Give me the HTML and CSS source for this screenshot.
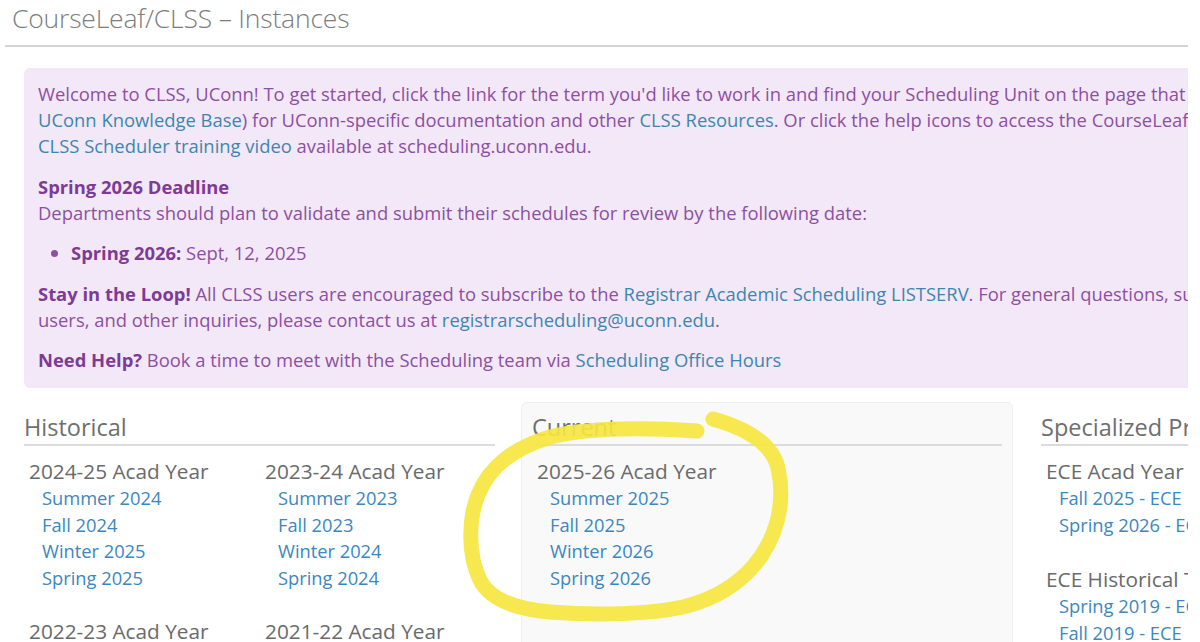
FILE: index.html
```html
<!DOCTYPE html>
<html>
<head>
<meta charset="utf-8">
<link rel="stylesheet" href="styles.css">
</head>
<body>
<div class="page">
  <header class="title-bar">
    <h1 class="title">CourseLeaf/CLSS – Instances</h1>
  </header>
  <section class="notice">
    <p class="para intro">Welcome to CLSS, UConn! To get started, click the link for the term you'd like to work in and find your Scheduling Unit on the page that<br><a class="link">UConn Knowledge Base</a>) for UConn-specific documentation and other <a class="link">CLSS Resources</a>. Or click the help icons to access the CourseLeaf<br><a class="link">CLSS Scheduler training video</a> available at scheduling.uconn.edu.</p>
    <p class="para"><strong>Spring 2026 Deadline</strong><br>Departments should plan to validate and submit their schedules for review by the following date:</p>
    <ul class="deadlines">
      <li><strong>Spring 2026:</strong> Sept, 12, 2025</li>
    </ul>
    <p class="para"><strong>Stay in the Loop!</strong> All CLSS users are encouraged to subscribe to the <a class="link">Registrar Academic Scheduling LISTSERV</a>. For general questions, su<br>users, and other inquiries, please contact us at <a class="link">registrarscheduling@uconn.edu</a>.</p>
    <p class="para"><strong>Need Help?</strong> Book a time to meet with the Scheduling team via <a class="link">Scheduling Office Hours</a></p>
  </section>
  <div class="lower">
    <section class="group historical">
      <h2 class="group-title">Historical</h2>
      <div class="years">
        <div class="year">
          <h3 class="year-title">2024-25 Acad Year</h3>
          <a class="term">Summer 2024</a>
          <a class="term">Fall 2024</a>
          <a class="term">Winter 2025</a>
          <a class="term">Spring 2025</a>
        </div>
        <div class="year">
          <h3 class="year-title">2023-24 Acad Year</h3>
          <a class="term">Summer 2023</a>
          <a class="term">Fall 2023</a>
          <a class="term">Winter 2024</a>
          <a class="term">Spring 2024</a>
        </div>
        <div class="year">
          <h3 class="year-title">2022-23 Acad Year</h3>
          <a class="term">Summer 2022</a>
        </div>
        <div class="year">
          <h3 class="year-title">2021-22 Acad Year</h3>
          <a class="term">Summer 2021</a>
        </div>
      </div>
    </section>
    <section class="group current">
      <h2 class="group-title">Current</h2>
      <div class="year">
        <h3 class="year-title">2025-26 Acad Year</h3>
        <a class="term">Summer 2025</a>
        <a class="term">Fall 2025</a>
        <a class="term">Winter 2026</a>
        <a class="term">Spring 2026</a>
      </div>
    </section>
    <section class="group special">
      <h2 class="group-title">Specialized Pr</h2>
      <div class="year">
        <h3 class="year-title">ECE Acad Year</h3>
        <a class="term">Fall 2025 - ECE</a>
        <a class="term">Spring 2026 - EC</a>
      </div>
      <div class="year">
        <h3 class="year-title">ECE Historical T</h3>
        <a class="term">Spring 2019 - EC</a>
        <a class="term">Fall 2019 - ECE</a>
      </div>
    </section>
  </div>
</div>
<svg class="scribble" width="1200" height="642" viewBox="0 0 1200 642">
  <path d="M713 419 C 745 428, 772 442, 778 468 C 785 500, 778 530, 762 555 C 745 580, 720 598, 683 607 C 650 614, 600 616, 550 612 C 515 609, 490 600, 480 580 C 468 555, 468 520, 478 495 C 490 465, 515 448, 550 437 C 585 428, 640 427, 697 431" fill="none" stroke="#f6e640" stroke-width="15" stroke-linecap="round" stroke-linejoin="round" opacity="0.92"/>
</svg>
</body>
</html>
```

FILE: styles.css
```css
html, body {
  margin: 0;
  padding: 0;
  background: #ffffff;
}

body {
  font-family: "Open Sans", "Liberation Sans", sans-serif;
  width: 1200px;
  height: 642px;
  overflow: hidden;
  position: relative;
}

.page {
  width: 1188px;
  height: 642px;
  overflow: hidden;
  background: #ffffff;
}

.title-bar {
  margin-left: 5px;
  padding-left: 7px;
  height: 47px;
  border-bottom: 2px solid #d4d4d4;
  box-sizing: border-box;
}

.title {
  margin: 0;
  padding-top: 1px;
  font-size: 26.5px;
  font-weight: 300;
  line-height: 34px;
  color: #7d7d7d;
  letter-spacing: -0.2px;
  white-space: nowrap;
}

.notice {
  margin: 21px 0 0 24px;
  width: 1300px;
  padding: 13px 0 15px 14px;
  background: #f3e8f7;
  border-radius: 6px;
  color: #8d4fa3;
  font-size: 18.4px;
  line-height: 26px;
  white-space: nowrap;
}

.para {
  margin: 0 0 14px 0;
}

.para.intro {
  margin-bottom: 15px;
}

.para:last-child {
  margin-bottom: 0;
}

.notice strong {
  font-weight: 700;
  color: #7d3b96;
}

.link {
  color: #3d86b0;
}

.deadlines {
  margin: 0 0 15px 0;
  padding-left: 33px;
}

.lower {
  display: flex;
  align-items: flex-start;
  margin-left: 24px;
  margin-top: 14px;
  gap: 26px;
  white-space: nowrap;
}

.group {
  padding-top: 8px;
  box-sizing: border-box;
}

.historical {
  width: 471px;
  flex: none;
}

.current {
  width: 492px;
  flex: none;
  height: 260px;
  padding-left: 10px;
  padding-right: 10px;
  background: #f9f9f9;
  border: 1px solid #efefef;
  border-radius: 6px;
}

.special {
  flex: none;
  width: 200px;
  margin-left: 2px;
}

.group-title {
  margin: 0;
  font-size: 23.5px;
  font-weight: 400;
  line-height: 34px;
  color: #6e6e6e;
  border-bottom: 2px solid #dcdcdc;
}

.current .group-title {
  margin-top: -1px;
}

.years {
  display: grid;
  grid-template-columns: 236px 236px;
}

.year {
  display: flex;
  flex-direction: column;
  padding-left: 5px;
  margin-top: 12px;
  margin-bottom: 15px;
}

.year-title {
  margin: 0 0 1px 0;
  font-size: 20.8px;
  font-weight: 400;
  line-height: 26px;
  color: #6a6a6a;
}

.special .year + .year {
  margin-top: 28px;
}

.term {
  padding-left: 13px;
  font-size: 18.3px;
  line-height: 26.5px;
  color: #3a87c2;
}

.scribble {
  position: absolute;
  left: 0;
  top: 0;
  pointer-events: none;
}
```
